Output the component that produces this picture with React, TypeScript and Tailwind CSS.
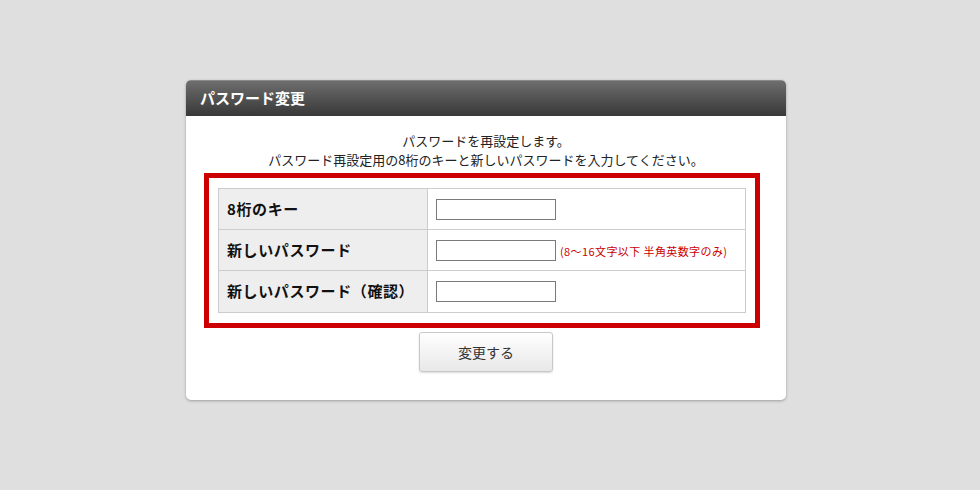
import React from "react";

const font = { fontFamily: '"Noto Sans CJK JP", "Noto Sans", sans-serif' };

function Row({ label, hint, last }: { label: string; hint?: string; last?: boolean }) {
  return (
    <div className={`flex h-[41px] ${last ? "" : "border-b border-[#cccccc]"}`}>
      <div className="w-[209px] shrink-0 bg-[#eeeeee] border-r border-[#cccccc] flex items-center pl-[8px] text-[15px] tracking-[0.6px] font-bold text-[#111111]">
        {label}
      </div>
      <div className="flex-1 flex items-center pl-[8px]">
        <input
          type="text"
          className="w-[120px] h-[21px] border border-[#7a7a7a] bg-white outline-none"
        />
        {hint && <span className="ml-[4px] text-[11px] tracking-[0.4px] text-[#cc0000] mt-[2px]">{hint}</span>}
      </div>
    </div>
  );
}

export default function App() {
  return (
    <div className="w-full h-[490px] bg-[#dfdfdf] pt-[80px]" style={font}>
      <div className="ml-[186px] w-[600px] h-[320px] bg-white rounded-[5px] shadow-[0_1px_3px_rgba(0,0,0,0.3)] overflow-hidden">
        <div className="h-[36px] bg-gradient-to-b from-[#6e6e6e] to-[#383838] border-t border-[#8a8a8a] flex items-center pl-[14px] text-white text-[15px] font-bold">
          パスワード変更
        </div>
        <div className="pt-[15px] text-center text-[13px] leading-[19px] text-[#222222]">
          <p>パスワードを再設定します。</p>
          <p>パスワード再設定用の8桁のキーと新しいパスワードを入力してください。</p>
        </div>
        <div className="mt-[4px] ml-[18px] w-[556px] border-[5px] border-[#cc0000] p-[9px] pt-[10px] pb-[10px]">
          <div className="border border-[#cccccc]">
            <Row label="8桁のキー" />
            <Row label="新しいパスワード" hint="(8～16文字以下 半角英数字のみ)" />
            <Row label="新しいパスワード（確認）" last />
          </div>
        </div>
        <div className="flex justify-center mt-[4px]">
          <button className="w-[134px] h-[40px] rounded-[3px] border border-[#c8c8c8] bg-gradient-to-b from-[#ffffff] to-[#e8e8e8] shadow-[0_1px_2px_rgba(0,0,0,0.15)] text-[14px] text-[#333333]">
            変更する
          </button>
        </div>
      </div>
    </div>
  );
}
